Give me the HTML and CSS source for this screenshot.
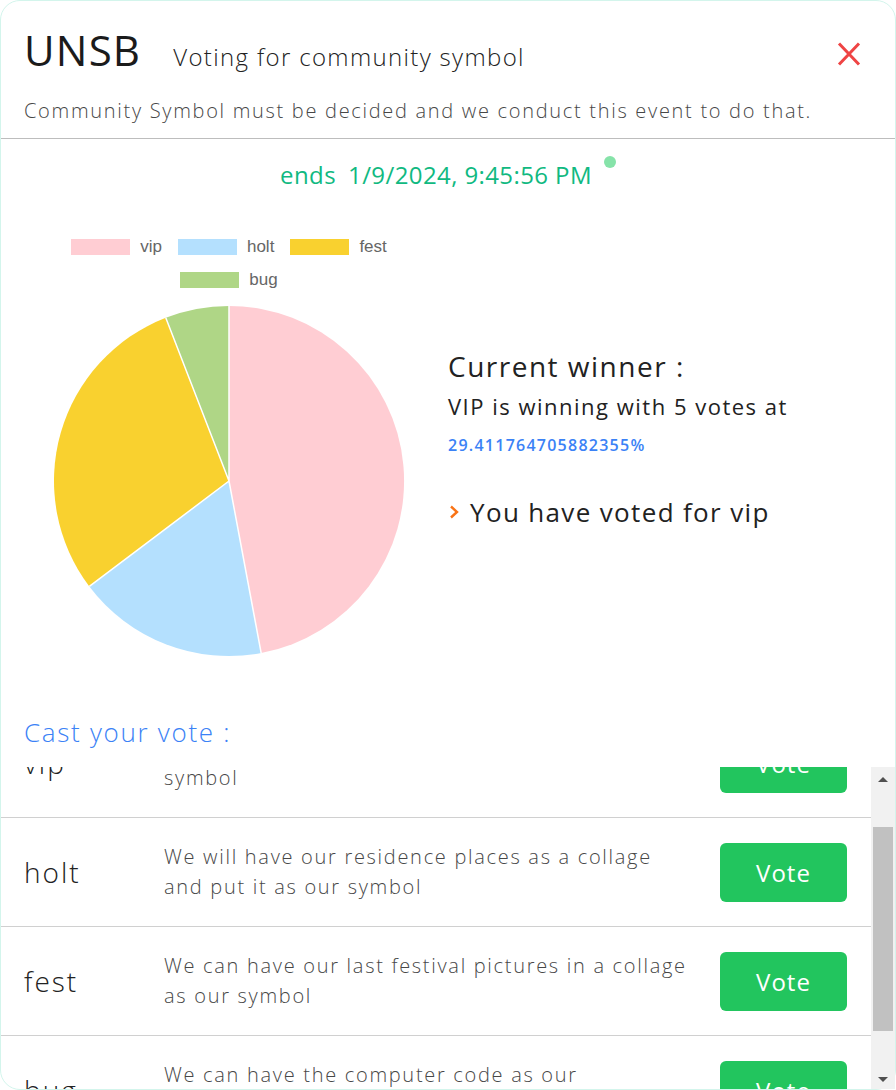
FILE: index.html
```html
<!DOCTYPE html>
<html lang="en">
<head>
<meta charset="utf-8">
<title>UNSB - Voting for community symbol</title>
<link rel="stylesheet" href="styles.css">
</head>
<body>
<div class="modal">
  <header class="head">
    <div class="title-row">
      <h1 class="brand">UNSB</h1>
      <h2 class="subtitle">Voting for community symbol</h2>
      <button class="close" aria-label="Close">
        <svg viewBox="0 0 24 24" width="24" height="24"><path d="M2 1.5L22 22.5M22 1.5L2 22.5" stroke="#ef4444" stroke-width="3" fill="none"/></svg>
      </button>
    </div>
    <p class="desc">Community Symbol must be decided and we conduct this event to do that.</p>
  </header>

  <div class="ends"><span class="ends-label">ends</span><span>1/9/2024, 9:45:56 PM</span><span class="dot"></span></div>

  <section class="results">
    <div class="chart">
      <ul class="legend">
        <li><span class="swatch sw-vip"></span>vip</li>
        <li><span class="swatch sw-holt"></span>holt</li>
        <li><span class="swatch sw-fest"></span>fest</li>
        <li><span class="swatch sw-bug"></span>bug</li>
      </ul>
      <svg class="pie" viewBox="0 0 352 352" width="352" height="352">
        <path d="M176 176L176 1A175 175 0 0 1 208.17 348.03Z" fill="#ffcdd3"/>
        <path d="M176 176L208.17 348.03A175 175 0 0 1 36.35 281.46Z" fill="#b4e0fe"/>
        <path d="M176 176L36.35 281.46A175 175 0 0 1 112.77 12.81Z" fill="#f9d12f"/>
        <path d="M176 176L112.77 12.81A175 175 0 0 1 176 1Z" fill="#afd686"/>
        <path d="M176 176L176 1M176 176L208.17 348.03M176 176L36.35 281.46M176 176L112.77 12.81" stroke="#fff" stroke-width="1.5" fill="none"/>
      </svg>
    </div>
    <div class="winner">
      <p class="current">Current winner :</p>
      <p class="winning">VIP is winning with 5 votes at</p>
      <p class="pct">29.411764705882355%</p>
      <p class="voted"><svg class="chev" viewBox="0 0 10 16" width="10" height="16"><path d="M2 2.5L8 8L2 13.5" stroke="#f97316" stroke-width="2.4" fill="none"/></svg>You have voted for vip</p>
    </div>
  </section>

  <h3 class="cast">Cast your vote :</h3>

  <div class="list-area">
    <div class="list">
      <div class="row">
        <div class="name">vip</div>
        <div class="text">We can have the photo of our VIP lounge as our symbol</div>
        <button class="vote">Vote</button>
      </div>
      <div class="row">
        <div class="name">holt</div>
        <div class="text">We will have our residence places as a collage and put it as our symbol</div>
        <button class="vote">Vote</button>
      </div>
      <div class="row">
        <div class="name">fest</div>
        <div class="text">We can have our last festival pictures in a collage as our symbol</div>
        <button class="vote">Vote</button>
      </div>
      <div class="row">
        <div class="name">bug</div>
        <div class="text">We can have the computer code as our representative symbol</div>
        <button class="vote">Vote</button>
      </div>
    </div>
    <div class="scrollbar" aria-hidden="true">
      <div class="sb-btn"><span class="tri tri-up"></span></div>
      <div class="sb-track"><div class="sb-thumb"></div></div>
      <div class="sb-btn"><span class="tri tri-down"></span></div>
    </div>
  </div>
</div>
<script src="script.js"></script>
</body>
</html>
```

FILE: styles.css
```css
html, body {
  margin: 0;
  background: #fff;
}
body {
  font-family: "Open Sans", "DejaVu Sans", sans-serif;
  color: #222;
}
.modal {
  box-sizing: border-box;
  width: 896px;
  height: 1090px;
  border: 1px solid #d3f5ec;
  border-radius: 20px;
  display: flex;
  flex-direction: column;
  background: #fff;
}
.head {
  height: 137px;
  padding: 0 34px 0 23px;
  border-bottom: 1px solid #bdbdbd;
}
.title-row {
  display: flex;
  align-items: baseline;
  margin-top: 21px;
  height: 56px;
}
.brand {
  margin: 0;
  font-size: 42px;
  line-height: 56px;
  font-weight: 500;
  letter-spacing: 1.2px;
  color: #1b1b1b;
}
.subtitle {
  margin: 0 0 0 32px;
  font-size: 24px;
  font-weight: 300;
  letter-spacing: 1.35px;
  color: #222;
}
.close {
  margin-left: auto;
  align-self: flex-start;
  margin-top: 20px;
  padding: 0;
  border: 0;
  background: none;
  width: 24px;
  height: 24px;
  display: flex;
}
.desc {
  margin: 18px 0 0;
  font-size: 20px;
  line-height: 30px;
  font-weight: 300;
  letter-spacing: 1.7px;
  color: #474747;
}
.ends {
  margin-top: 18px;
  display: flex;
  justify-content: center;
  font-size: 24px;
  line-height: 36px;
  letter-spacing: 0.4px;
  color: #10b981;
}
.ends-label {
  margin-right: 12px;
}
.dot {
  width: 12px;
  height: 12px;
  border-radius: 50%;
  background: #86e3a9;
  margin: -1px 0 0 12px;
}
.results {
  display: grid;
  grid-template-columns: 410px 1fr;
  column-gap: 14px;
  margin-top: 37px;
  padding-left: 23px;
}
.chart {
  display: flex;
  flex-direction: column;
  align-items: center;
}
.legend {
  list-style: none;
  margin: 0;
  padding: 0;
  width: 340px;
  display: flex;
  flex-wrap: wrap;
  justify-content: center;
  column-gap: 16px;
  font-family: "Liberation Sans", Arial, sans-serif;
  font-size: 17px;
  color: #666;
}
.legend li {
  display: flex;
  align-items: center;
  gap: 10px;
  height: 33px;
}
.swatch {
  width: 59px;
  height: 16px;
}
.sw-vip { background: #ffcdd3; }
.sw-holt { background: #b4e0fe; }
.sw-fest { background: #f9d12f; }
.sw-bug { background: #afd686; }
.pie {
  margin-top: 9px;
  display: block;
}
.winner p {
  margin: 0;
}
.winner {
  padding-top: 116px;
}
.current {
  font-size: 28px;
  line-height: 40px;
  letter-spacing: 1.5px;
  color: #222;
}
.winning {
  margin-top: 4px !important;
  font-size: 22px;
  line-height: 32px;
  letter-spacing: 1.5px;
  color: #222;
}
.pct {
  margin-top: 11px !important;
  font-size: 16px;
  line-height: 24px;
  font-weight: 600;
  letter-spacing: 1.25px;
  color: #3b82f6;
}
.voted {
  margin-top: 37px !important;
  display: flex;
  align-items: center;
  gap: 11px;
  font-size: 26px;
  line-height: 36px;
  letter-spacing: 1.35px;
  color: #222;
}
.chev {
  flex: none;
  margin-left: 1px;
}
.cast {
  margin: 57px 0 0;
  padding-left: 23px;
  font-size: 26px;
  line-height: 36px;
  font-weight: 300;
  letter-spacing: 1.7px;
  color: #3b82f6;
}
.list-area {
  margin-top: 17px;
  flex: 1;
  min-height: 0;
  display: flex;
}
.list {
  flex: 1;
  min-width: 0;
  overflow: hidden;
}
.row {
  display: flex;
  align-items: center;
  height: 60px;
  padding: 24px 24px 24px 23px;
  border-bottom: 1px solid #d0d0d0;
}
.name {
  flex: none;
  width: 140px;
  font-size: 28px;
  font-weight: 300;
  letter-spacing: 2px;
  color: #222;
}
.text {
  width: 528px;
  font-size: 20px;
  line-height: 30px;
  font-weight: 300;
  letter-spacing: 1.7px;
  color: #474747;
}
.vote {
  margin-left: auto;
  flex: none;
  width: 127px;
  height: 59px;
  border: 0;
  border-radius: 6px;
  background: #22c55e;
  color: #fff;
  font-family: inherit;
  font-size: 24px;
  letter-spacing: 1px;
}
.scrollbar {
  flex: none;
  width: 24px;
  background: #f1f1f1;
  display: flex;
  flex-direction: column;
}
.sb-btn {
  height: 24px;
  display: flex;
  align-items: center;
  justify-content: center;
}
.sb-track {
  flex: 1;
  padding: 36px 2px 0;
}
.sb-thumb {
  height: 204px;
  background: #c1c1c1;
}
.tri {
  width: 0;
  height: 0;
  border-left: 5px solid transparent;
  border-right: 5px solid transparent;
}
.tri-up {
  border-bottom: 5px solid #505050;
  margin-top: 1px;
}
.tri-down {
  border-top: 5px solid #505050;
  margin-top: 4px;
}
```

FILE: script.js
```js
document.querySelector('.list').scrollTop = 58;
```
